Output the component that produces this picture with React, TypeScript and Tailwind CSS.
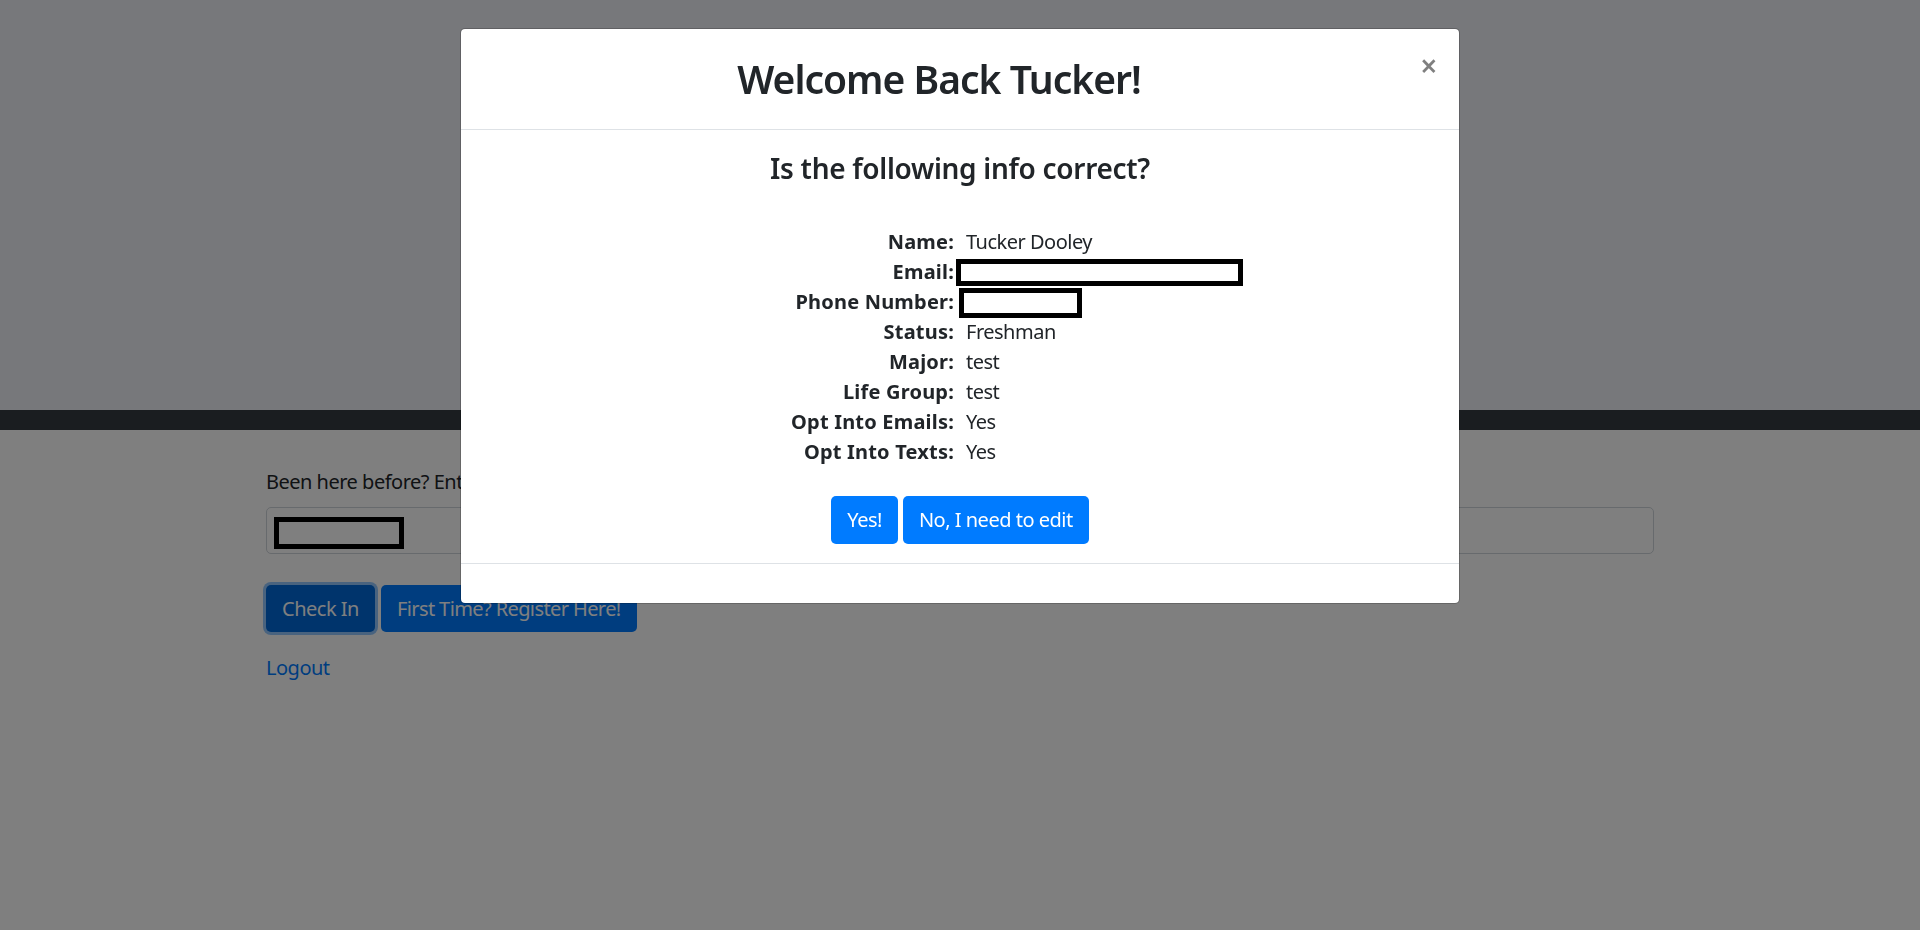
import React from "react";

type InfoRow = {
  label: string;
  value?: string;
  hidden?: "email" | "phone";
};

const rows: InfoRow[] = [
  { label: "Name:", value: "Tucker Dooley" },
  { label: "Email:", hidden: "email" },
  { label: "Phone Number:", hidden: "phone" },
  { label: "Status:", value: "Freshman" },
  { label: "Major:", value: "test" },
  { label: "Life Group:", value: "test" },
  { label: "Opt Into Emails:", value: "Yes" },
  { label: "Opt Into Texts:", value: "Yes" },
];

// black redaction boxes that cover personal info in the screenshot
function Redacted({ kind }: { kind: "email" | "phone" }) {
  if (kind === "email") {
    return (
      <span className="-ml-[10px] mt-[2px] inline-block h-[27px] w-[287px] border-[5px] border-black bg-white" />
    );
  }
  return (
    <span className="-ml-[7px] mt-[1px] inline-block h-[30px] w-[123px] border-[5px] border-black bg-white" />
  );
}

function CheckInPage() {
  return (
    <div>
      <div className="h-[410px] bg-[#eff1f7]" />
      <div className="h-[20px] bg-[#343a40]" />
      <div className="mx-auto w-[1388px] pt-[37px]">
        <label className="mb-[10px] block leading-[30px]">
          Been here before? Enter your email or phone number to check in!
        </label>
        <div className="flex h-[47px] items-start rounded-[5px] border border-[#ced4da] bg-white pl-[7px] pt-[9px]">
          <span className="inline-block h-[32px] w-[130px] border-[5px] border-black bg-white" />
        </div>
        <div className="mt-[31px] flex gap-[6px]">
          <button className="h-[47px] rounded-[5px] bg-[#0069d9] px-4 leading-[30px] text-white shadow-[0_0_0_3px_rgba(38,143,255,0.5)]">
            Check In
          </button>
          <button className="h-[47px] rounded-[5px] bg-[#007bff] px-4 leading-[30px] tracking-[-0.6px] text-white">
            First Time? Register Here!
          </button>
        </div>
        <a href="#" className="mt-[21px] inline-block leading-[30px] text-[#007bff]">
          Logout
        </a>
      </div>
    </div>
  );
}

function ConfirmModal() {
  return (
    <div className="fixed inset-0 flex justify-center pt-[28px]">
      <div className="h-fit w-[1000px] rounded-[5px] border border-black/20 bg-white bg-clip-padding">
        <div className="flex h-[101px] items-center border-b border-[#dee2e6] pl-[16px] pr-[3px]">
          <h1 className="flex-1 text-center text-[39px] leading-[48px] font-semibold tracking-[-1px]">
            Welcome Back Tucker!
          </h1>
          <button className="mt-[22px] h-[28px] w-[55px] self-start text-[30px] leading-none font-semibold text-black/50">
            ×
          </button>
        </div>
        <div className="pt-[22px] pb-[19px]">
          <h3 className="text-center text-[28px] leading-[33.6px] font-semibold tracking-[-0.3px]">
            Is the following info correct?
          </h3>
          <div className="mt-[41px]">
            {rows.map((row) => (
              <div key={row.label} className="flex h-[30px] leading-[30px]">
                <div className="w-[493px] text-right font-bold tracking-[0.2px]">{row.label}</div>
                <div className="flex items-start pl-[12px]">
                  {row.hidden ? <Redacted kind={row.hidden} /> : row.value}
                </div>
              </div>
            ))}
          </div>
          <div className="mt-[29px] flex justify-center gap-[5px]">
            <button className="h-[48px] rounded-[5px] bg-[#007bff] px-4 leading-[30px] text-white">
              Yes!
            </button>
            <button className="h-[48px] rounded-[5px] bg-[#007bff] px-4 leading-[30px] text-white">
              No, I need to edit
            </button>
          </div>
        </div>
        <div className="h-[40px] border-t border-[#dee2e6]" />
      </div>
    </div>
  );
}

export default function App() {
  return (
    <div className="relative min-h-[930px] bg-white font-['Noto_Sans',sans-serif] text-[20px] tracking-[-0.5px] text-[#212529]">
      <CheckInPage />
      <div className="fixed inset-0 bg-black/50" />
      <ConfirmModal />
    </div>
  );
}
